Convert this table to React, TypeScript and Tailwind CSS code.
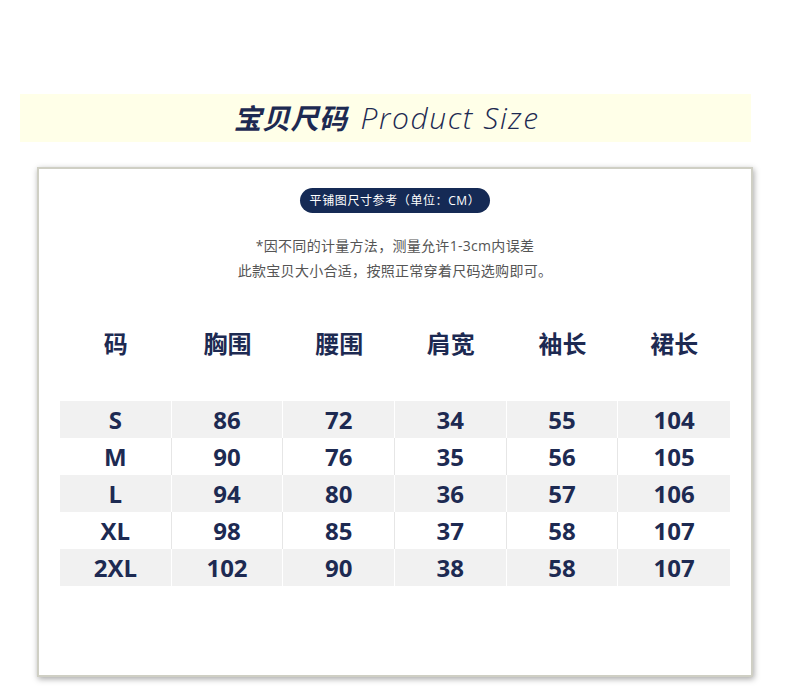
const headers = ["码", "胸围", "腰围", "肩宽", "袖长", "裙长"]

const rows = [
  ["S", "86", "72", "34", "55", "104"],
  ["M", "90", "76", "35", "56", "105"],
  ["L", "94", "80", "36", "57", "106"],
  ["XL", "98", "85", "37", "58", "107"],
  ["2XL", "102", "90", "38", "58", "107"],
]

const cjk = "font-['Open_Sans','Noto_Sans_CJK_SC',sans-serif]"

export default function App() {
  return (
    <main className={`w-[790px] h-[692px] bg-white overflow-hidden ${cjk}`}>
      {/* Title banner */}
      <div className="mt-[94px] ml-[20px] w-[731px] h-[48px] bg-[#ffffe8] flex items-center justify-center gap-[13px] text-[#1d2a52] pl-[2px] pb-[1px]">
        <span className="text-[28px] font-bold italic leading-none tracking-[0.5px]">宝贝尺码</span>
        <span className="text-[30px] italic font-light leading-none tracking-[1.6px]">Product Size</span>
      </div>

      {/* Size card */}
      <div className="mt-[25px] ml-[37px] w-[716px] h-[510px] bg-white border-2 border-[#cfcfc4] shadow-[1px_2px_6px_rgba(0,0,0,0.35)] flex flex-col items-center">
        <div className="mt-[19px] h-[25px] w-[190px] rounded-full bg-[#152a55] text-white text-[12px] tracking-[0.6px] flex items-center justify-center">
          平铺图尺寸参考（单位：CM）
        </div>
        <div className="mt-[20px] text-[14px] leading-[25px] tracking-[0.3px] text-[#555] text-center">
          <p>*因不同的计量方法，测量允许1-3cm内误差</p>
          <p>此款宝贝大小合适，按照正常穿着尺码选购即可。</p>
        </div>

        <div className="mt-[43px] w-[670px] grid grid-cols-6 text-[#1d2a52] font-bold">
          {headers.map((h) => (
            <div key={h} className="h-[36px] flex items-center justify-center text-[24px]">
              {h}
            </div>
          ))}
        </div>

        <div className="mt-[39px] w-[670px] flex flex-col text-[#1d2a52] font-bold">
          {rows.map((row, i) => (
            <div
              key={row[0]}
              className={`grid grid-cols-6 h-[37px] ${i % 2 === 0 ? "bg-[#f1f1f1] divide-x divide-white" : "bg-white divide-x divide-[#e6e6e6]"}`}
            >
              {row.map((cell, j) => (
                <div key={j} className="flex items-center justify-center text-[24px] leading-none">
                  {cell}
                </div>
              ))}
            </div>
          ))}
        </div>
      </div>
    </main>
  )
}
